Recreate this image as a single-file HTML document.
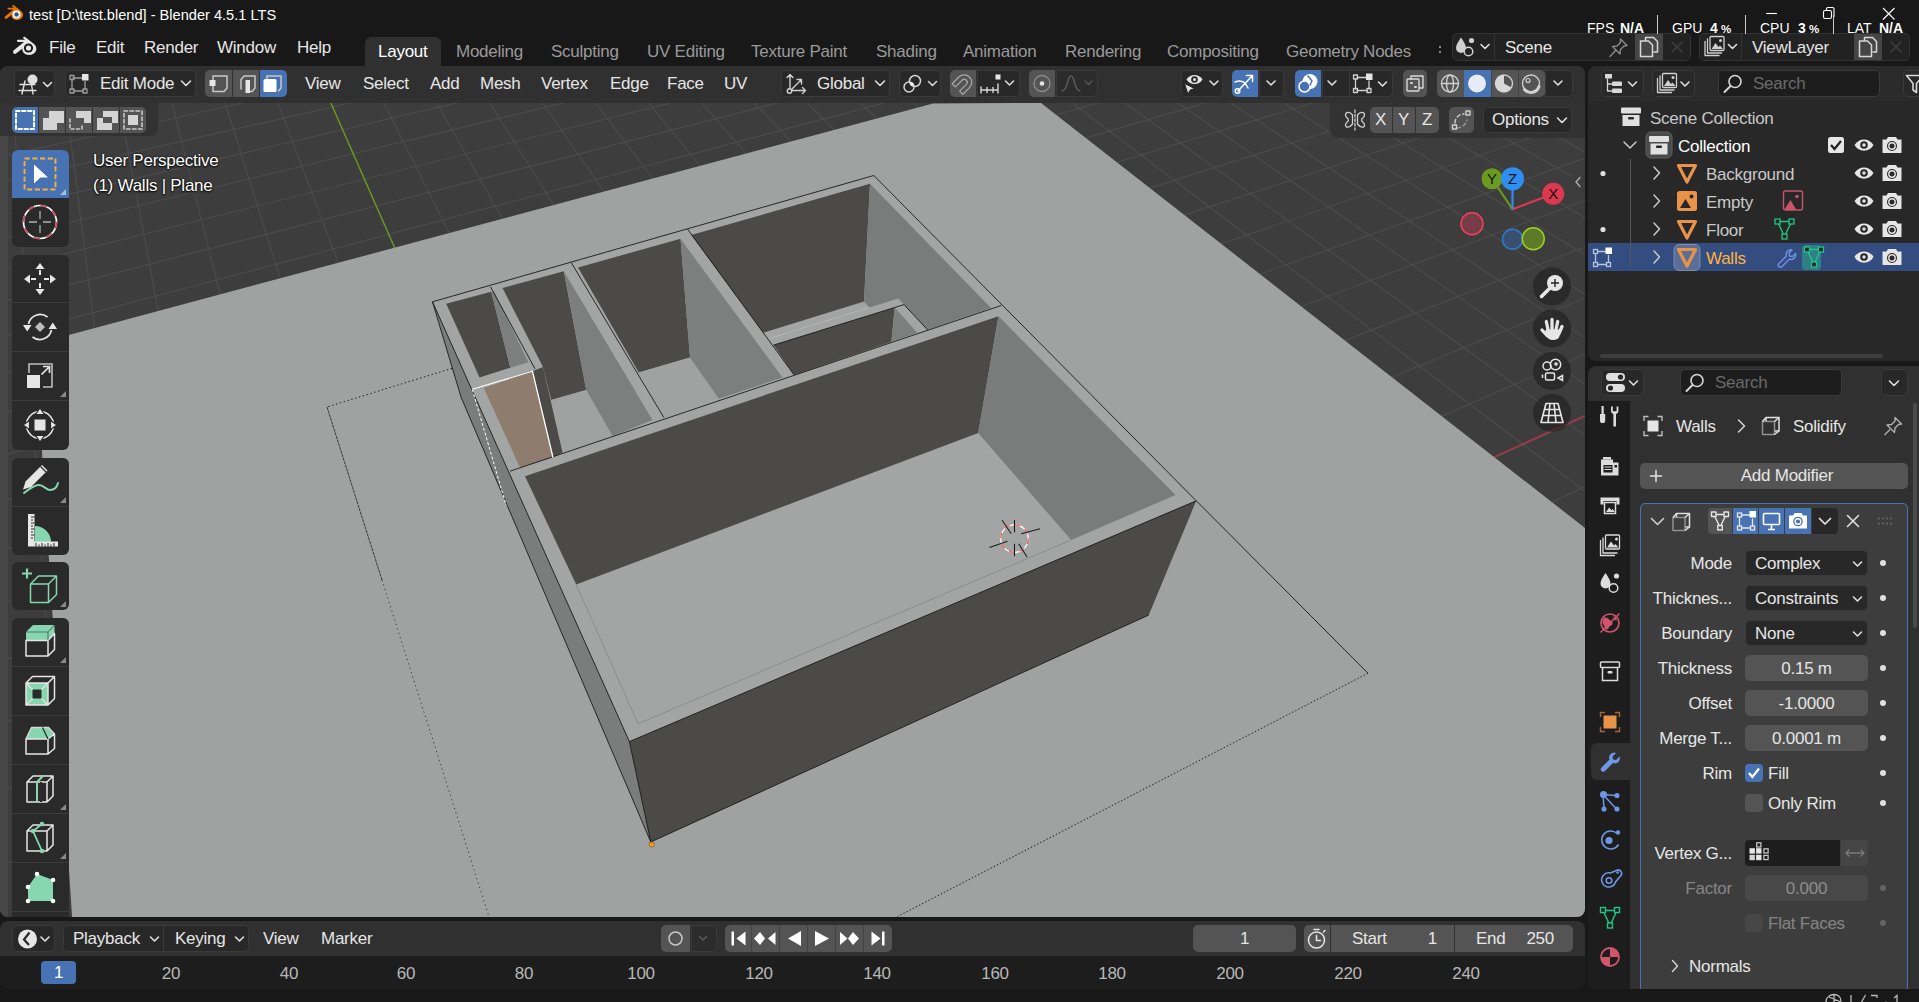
<!DOCTYPE html>
<html><head><meta charset="utf-8"><title>Blender</title>
<style>
*{box-sizing:border-box;margin:0;padding:0}
html,body{width:1919px;height:1002px;overflow:hidden;background:#181818}
body{font-family:"Liberation Sans",sans-serif;font-size:17px;letter-spacing:-.25px;color:#e6e6e6;position:relative}
.abs{position:absolute}
.t{position:absolute;white-space:nowrap;line-height:20px;height:20px}
.hdr{position:absolute;background:#303030}
.dd{position:absolute;background:#282828;border-radius:5px;border:1px solid #3a3a3a}
.btn{position:absolute;background:#545454;border-radius:5px}
.blue{background:#4772b3}
svg{position:absolute;overflow:visible}
.ic{stroke-linecap:round;stroke-linejoin:round}.ic:not([stroke]){stroke:#e0e0e0}.ic:not([fill]){fill:none}.ic:not([stroke-width]){stroke-width:1.5}
g.ic *{vector-effect:none}
</style></head><body>

<!-- AREAS -->
<div class="abs" style="left:1588px;top:66px;width:331px;height:295px;background:#282828;border-radius:8px 0 0 8px"></div>
<div class="abs" style="left:1588px;top:66px;width:331px;height:35px;background:#2b2b2b;border-radius:8px 0 0 0"></div>
<div class="abs" style="left:1588px;top:366px;width:331px;height:624px;background:#303030;border-radius:8px 0 0 8px"></div>
<div class="abs" style="left:1588px;top:401px;width:42px;height:589px;background:#1d1d1d;border-radius:0 0 0 8px"></div>
<div class="abs" style="left:0px;top:921px;width:1585px;height:68px;background:#1d1d1d;border-radius:8px"></div>
<div class="abs" style="left:0px;top:921px;width:1585px;height:35px;background:#303030;border-radius:8px 8px 0 0"></div>

<svg id="scene" width="1919" height="1002" viewBox="0 0 1919 1002" style="position:absolute;left:0;top:0">
<defs><clipPath id="vpclip"><rect x="0" y="66" width="1585" height="851" rx="8" ry="8"/></clipPath></defs>
<g clip-path="url(#vpclip)">
<rect x="0" y="66" width="1585" height="851" fill="#3d3d3d"/>
<path d="M10.9 66.0L64.6 917.0M61.5 66.0L168.7 917.0M112.1 66.0L272.8 917.0M162.7 66.0L376.9 917.0M213.4 66.0L481.1 917.0M264.0 66.0L585.2 917.0M365.3 66.0L793.4 917.0M415.9 66.0L897.5 917.0M466.5 66.0L1001.6 917.0M517.1 66.0L1105.7 917.0M567.8 66.0L1209.9 917.0M618.4 66.0L1314.0 917.0M669.0 66.0L1418.1 917.0M719.6 66.0L1522.2 917.0M770.3 66.0L1585.0 875.9M820.9 66.0L1585.0 780.9M871.5 66.0L1585.0 696.5M922.2 66.0L1585.0 620.9M972.8 66.0L1585.0 552.9M1023.4 66.0L1585.0 491.4M1074.0 66.0L1585.0 435.4M1124.7 66.0L1585.0 384.4M1175.3 66.0L1585.0 337.6M1225.9 66.0L1585.0 294.5M1276.5 66.0L1585.0 254.7M1327.2 66.0L1585.0 217.9M1377.8 66.0L1585.0 183.7M1428.4 66.0L1585.0 151.9M1479.1 66.0L1585.0 122.2M1529.7 66.0L1585.0 94.4M1580.3 66.0L1585.0 68.3M101.8 66.0L0.0 86.9M204.3 66.0L0.0 109.1M306.7 66.0L0.0 132.4M409.1 66.0L0.0 156.9M511.6 66.0L0.0 182.8M614.0 66.0L0.0 210.2M716.4 66.0L0.0 239.2M818.9 66.0L0.0 270.0M921.3 66.0L0.0 302.6M1023.7 66.0L0.0 337.4M1126.1 66.0L0.0 374.5M1228.6 66.0L0.0 414.1M1331.0 66.0L0.0 456.5M1433.4 66.0L0.0 502.1M1535.9 66.0L0.0 551.1M1585.0 83.5L0.0 604.1M1585.0 119.3L0.0 661.4M1585.0 158.1L0.0 723.7M1585.0 200.5L0.0 791.7M1585.0 246.9L0.0 866.1M1585.0 297.9L75.2 917.0M1585.0 354.2L280.8 917.0M1585.0 416.8L486.4 917.0M1585.0 486.6L692.0 917.0M1585.0 565.1L897.6 917.0M1585.0 654.1L1103.2 917.0" stroke="#4c4c4c" stroke-width="1.1" fill="none"/>
<path d="M314.6 66.0L689.3 917.0" stroke="#6f9a1f" stroke-width="1.4"/>
<path d="M1585.0 415.7L483.0 917.0" stroke="#b03546" stroke-width="1.5"/>
<polygon points="933.0,103.4 1041.0,103.0 1585.0,528.0 1620.0,555.0 1620.0,930.0 73.0,930.0 72.0,916.0 35.0,344.0 68.8,335.0" fill="#a0a2a2" />
<polygon points="432.5,301.8 873.8,175.5 1196.2,500.8 629.4,741.6" fill="#a3a5a5" />
<polygon points="432.5,301.8 629.4,741.6 650.8,842.0 461.0,397.0" fill="#7b7d7d" />
<polygon points="629.4,741.6 1196.2,500.8 1148.8,615.0 650.8,842.0" fill="#4b4a49" />
<polygon points="446.2,303.8 491.2,291.8 510.3,367.7 479.5,377.6" fill="#4b4a49" />
<polygon points="491.2,291.8 494.0,290.9 528.3,362.2 510.3,367.7" fill="#7d7f7e" />
<polygon points="502.5,288.0 563.8,271.2 586.2,390.0 551.2,400.0 543.0,367.0" fill="#4b4a49" />
<polygon points="563.8,271.2 652.5,420.0 612.5,436.2 586.2,390.0" fill="#7d7f7e" />
<polygon points="551.2,400.0 586.2,390.0 612.5,436.2 562.5,452.5" fill="#a0a2a2" />
<polygon points="483.8,388.0 532.5,371.2 553.0,457.5 520.0,467.7" fill="#8e7d6e" />
<polygon points="532.5,371.2 543.0,367.0 562.5,452.5 553.0,457.5" fill="#4b4a49" />
<polygon points="578.0,267.5 680.5,238.8 690.0,357.5 638.8,372.5" fill="#4b4a49" />
<polygon points="638.8,372.5 690.0,357.5 718.8,398.8 663.8,417.5" fill="#a0a2a2" />
<polygon points="680.5,238.8 782.5,377.5 718.8,398.8 690.0,357.5" fill="#7d7f7e" />
<polygon points="691.2,235.0 870.0,183.8 864.0,301.4 763.3,332.7" fill="#4b4a49" />
<polygon points="870.0,183.8 991.0,308.0 927.5,329.8 904.1,304.6 898.3,298.5 869.3,307.5 864.0,301.4" fill="#7a7c7b" />
<polygon points="773.6,345.1 894.7,307.6 891.4,341.8 794.0,375.0" fill="#4b4a49" />
<polygon points="894.7,307.6 917.3,332.7 891.4,341.8" fill="#7d7f7e" />
<polygon points="525.0,476.2 998.5,316.2 978.2,433.0 576.2,584.5" fill="#4b4a49" />
<polygon points="998.5,316.2 1175.5,495.0 1071.2,540.0 978.2,433.0" fill="#7a7c7b" />
<path d="M576.25 584.5L638 723.75L1071.25 540" stroke="#8b8d8d" stroke-width="1" fill="none"/>
<path d="M769.2 338.6L869.3 307.5" stroke="#b4b6b6" stroke-width="1" fill="none"/>
<path d="M432.5 301.8L873.8 175.5M873.8 175.5L1196.2 500.8M1196.2 500.8L629.4 741.6M629.4 741.6L432.5 301.8M490.5 286.8L535.0 368.8M472.5 389.5L532.5 371.2M571.2 262.5L663.8 417.5M687.5 229.0L793.8 374.5M510.0 471.2L1001.2 305.5M773.6 345.1L904.1 304.6M904.1 304.6L927.5 329.8M629.4 741.6L650.8 842.0M650.8 842.0L1148.8 615.0M432.5 301.8L461.0 397.0M461.0 397.0L650.8 842.0" stroke="#1a1a1a" stroke-width="0.9" fill="none"/>
<path d="M1196.25 500.75L1368 673.25" stroke="#1a1a1a" stroke-width="0.9"/>
<path d="M1368 673.25L897.5 916.5" stroke="#222" stroke-width="1" stroke-dasharray="1.5 2"/>
<path d="M452 368.3L327 407" stroke="#222" stroke-width="1" stroke-dasharray="1.5 2.5" fill="none"/>
<path d="M327 407L382 580" stroke="#2a2a2a" stroke-width="0.9" stroke-dasharray="3 0.8" fill="none"/>
<path d="M382 580L490 920" stroke="#333" stroke-width="1" stroke-dasharray="1.2 3.4" fill="none"/>
<path d="M472.3 389.4L532.5 371.25L553 457.5" stroke="#fff" stroke-width="1.3" fill="none"/>
<path d="M472.3 389.4L506 505" stroke="#fff" stroke-width="1" stroke-dasharray="3 2" fill="none"/>
<circle cx="651.7" cy="844.5" r="2.6" fill="#f39c28" stroke="#7a4a10" stroke-width="0.6"/>
<g fill="none"><circle cx="1014.5" cy="538.6" r="13.8" stroke="#fff" stroke-width="1.3"/><circle cx="1014.5" cy="538.6" r="13.8" stroke="#ee5a55" stroke-width="1.3" stroke-dasharray="5.4 5.44"/>
<path d="M1014.5 520v12.5M1014.5 543.7v12.5M989.5 547.5l18-6.2M1021.2 533.7l18.8-5M1002 520l9.2 13.7M1018.7 543.7l8.3 13.3" stroke="#1c1c1c" stroke-width="1.1"/></g>
<rect x="0" y="100" width="8" height="820" fill="#474747"/>
</g></svg>
<!-- VIEWPORT HEADER -->
<div class="abs" style="left:0px;top:66px;width:1585px;height:37px;background:#303030;border-radius:8px 8px 0 0"></div>
<div class="abs" style="left:0px;top:103px;width:158px;height:33px;background:rgba(48,48,48,.82);border-radius:0 0 8px 0"></div>
<div class="abs" style="left:1330px;top:103px;width:255px;height:35px;background:rgba(48,48,48,.82);border-radius:0 0 0 8px"></div>
<!-- editor type -->
<div class="dd" style="left:14px;top:70px;width:41px;height:27px"></div>
<svg style="left:18px;top:72px" width="36" height="24" viewBox="0 0 36 24"><g class="ic" stroke-width="1.4"><path d="M2 12.5h15M1 18.5h17M7 9l-3 13M13 9l2 13"/></g><circle cx="14.5" cy="7.5" r="5" fill="#e0e0e0"/><path d="M25.5 10.5l4 4 4-4" class="ic" stroke-width="1.6"/></svg>
<!-- mode dropdown -->
<div class="dd" style="left:65px;top:70px;width:131px;height:27px"></div>
<svg style="left:68px;top:72px" width="24" height="24" viewBox="0 0 24 24"><g class="ic" stroke="#9c9c9c" stroke-width="1.3"><path d="M5 6h9M4 7.5v10M5.5 19h10M17 9.5v8"/><rect x="2" y="3.5" width="4" height="4"/><rect x="2" y="17" width="4" height="4"/><rect x="15" y="17" width="4" height="4"/></g><rect x="14" y="2" width="6.5" height="6.5" fill="#e6e6e6"/></svg>
<div class="t" style="left:100px;top:74px">Edit Mode</div>
<svg style="left:179px;top:77px" width="14" height="12" viewBox="0 0 14 12"><path d="M2.5 4l4.5 4.5L11.500 4" class="ic" stroke-width="1.6"/></svg>
<!-- select modes -->
<div class="btn" style="left:205px;top:70px;width:27px;height:27px;border-radius:5px 0 0 5px"></div>
<div class="btn" style="left:233px;top:70px;width:26px;height:27px;border-radius:0"></div>
<div class="btn blue" style="left:260px;top:70px;width:27px;height:27px;border-radius:0 5px 5px 0"></div>
<svg style="left:205px;top:70px" width="82" height="27" viewBox="0 0 82 27"><g class="ic" stroke="#c8c8c8" stroke-width="1.5"><path d="M8 6h14v12l-3 3.500H8v-6M8 11V6"/><path d="M36 19V9.500l3-3.500h11v12l-3 3.500h-2"/><path d="M62 9V6h14v12l-2.500 3"/></g><rect x="4.500" y="10" width="6" height="6" fill="#e6e6e6"/><rect x="40.500" y="10" width="4.500" height="13" fill="#e6e6e6"/><rect x="58.500" y="9" width="13" height="13" rx="1.500" fill="#fff"/></svg>
<!-- menus -->
<div class="t" style="left:305px;top:74px">View</div>
<div class="t" style="left:363px;top:74px">Select</div>
<div class="t" style="left:430px;top:74px">Add</div>
<div class="t" style="left:480px;top:74px">Mesh</div>
<div class="t" style="left:541px;top:74px">Vertex</div>
<div class="t" style="left:610px;top:74px">Edge</div>
<div class="t" style="left:667px;top:74px">Face</div>
<div class="t" style="left:724px;top:74px">UV</div>
<!-- orientation -->
<div class="dd" style="left:781px;top:70px;width:109px;height:27px"></div>
<svg style="left:785px;top:72px" width="26" height="24" viewBox="0 0 26 24"><g class="ic" stroke="#d0d0d0" stroke-width="1.4"><path d="M5 2.500v14M2 5.500l3-3 3 3M6.500 18.500h14M17.500 15.500l3 3-3 3M7 17l9-9M12 7.500h4.500V12"/><circle cx="4.500" cy="19" r="2.200"/></g></svg>
<div class="t" style="left:817px;top:74px">Global</div>
<svg style="left:873px;top:77px" width="14" height="12" viewBox="0 0 14 12"><path d="M2.500 4l4.500 4.500L11.500 4" class="ic" stroke-width="1.600"/></svg>
<!-- pivot -->
<div class="dd" style="left:899px;top:70px;width:42px;height:27px"></div>
<svg style="left:901px;top:72px" width="40" height="24" viewBox="0 0 40 24"><g class="ic" stroke="#d8d8d8" stroke-width="1.500"><circle cx="14" cy="9" r="5.500"/><circle cx="8" cy="15" r="5"/><path d="M27.500 9.500l4 4 4-4" stroke-width="1.600"/></g><circle cx="11" cy="12" r="1.600" fill="#fff"/></svg>
<!-- snap -->
<div class="btn" style="left:950px;top:70px;width:26px;height:27px;border-radius:5px 0 0 5px"></div>
<div class="dd" style="left:977px;top:70px;width:43px;height:27px;border-radius:0 5px 5px 0"></div>
<svg style="left:950px;top:70px" width="72" height="27" viewBox="0 0 72 27"><g transform="translate(13.500 13) rotate(45)"><path d="M-7.500 8.500V-1a7.500 7.500 0 0 1 15 0V8.500H3V-1a3 3 0 0 0-6 0V8.500z" class="ic" stroke="#a6a6a6" stroke-width="1.300"/></g><g class="ic" stroke="#d8d8d8" stroke-width="1.400"><path d="M31 20h16M31 17v6M37 17.500v5M43 17.500v5M48 14v9"/><path d="M55.500 11l4 4 4-4" stroke-width="1.600"/></g><rect x="45.500" y="4.500" width="5" height="5" fill="#e6e6e6"/></svg>
<!-- proportional -->
<div class="btn" style="left:1029px;top:70px;width:26px;height:27px;border-radius:5px 0 0 5px"></div>
<div class="dd" style="left:1056px;top:70px;width:42px;height:27px;border-radius:0 5px 5px 0;background:#2c2c2c"></div>
<svg style="left:1029px;top:70px" width="70" height="27" viewBox="0 0 70 27"><circle cx="13" cy="13.500" r="8" class="ic" stroke="#8e8e8e" stroke-width="1.300"/><circle cx="13" cy="13.500" r="2.300" fill="#e6e6e6"/><path d="M33 21c6 0 5-15 9-15s3 15 9 15" class="ic" stroke="#5e5e5e" stroke-width="1.400"/><path d="M56 11l3.500 3.500L63 11" class="ic" stroke="#555" stroke-width="1.500"/></svg>
<!-- right: visibility -->
<div class="dd" style="left:1181px;top:70px;width:42px;height:27px"></div>
<svg style="left:1181px;top:70px" width="42" height="27" viewBox="0 0 42 27"><path d="M3.500 13.500l3.500 10.500 2.200-4 4.300-1.500z" fill="#e6e6e6" stroke="#282828" stroke-width="1"/><path d="M5.500 9.500c3.500-6 12.500-6 16 0-3.500 6-12.500 6-16 0z" fill="#e6e6e6"/><circle cx="13.500" cy="9.500" r="3.300" fill="#282828"/><circle cx="13.500" cy="9.500" r="1.500" fill="#e6e6e6"/><path d="M29 11l4 4 4-4" class="ic" stroke-width="1.600"/></svg>
<!-- gizmo -->
<div class="btn blue" style="left:1232px;top:70px;width:26px;height:27px;border-radius:5px 0 0 5px"></div>
<div class="dd" style="left:1259px;top:70px;width:25px;height:27px;border-radius:0 5px 5px 0"></div>
<svg style="left:1232px;top:70px" width="52" height="27" viewBox="0 0 52 27"><g class="ic" stroke="#fff" stroke-width="1.500"><path d="M3 12c5-2 10-1 13 6M6 21l14-15M14.500 5.500H20.500v6"/><circle cx="5.500" cy="21" r="2.300"/></g><path d="M35 11l4 4 4-4" class="ic" stroke-width="1.600"/></svg>
<!-- overlays -->
<div class="btn blue" style="left:1295px;top:70px;width:26px;height:27px;border-radius:5px 0 0 5px"></div>
<div class="dd" style="left:1322px;top:70px;width:28px;height:27px;border-radius:0"></div>
<svg style="left:1295px;top:70px" width="52" height="27" viewBox="0 0 52 27"><circle cx="15" cy="11.500" r="7.500" fill="#fff"/><circle cx="9.500" cy="16.500" r="5.500" class="ic" stroke="#fff" stroke-width="1.500" fill="#4772b3"/><path d="M13 6l4 5-2 4" class="ic" stroke="#4772b3" stroke-width="1.500"/><path d="M33 11l4 4 4-4" class="ic" stroke-width="1.600"/></svg>
<!-- mesh edit dd -->
<div class="dd" style="left:1350px;top:70px;width:43px;height:27px;border-radius:0 5px 5px 0;border-left:none"></div>
<svg style="left:1352px;top:71px" width="40" height="26" viewBox="0 0 40 26"><g class="ic" stroke="#d0d0d0" stroke-width="1.300"><path d="M5 6.500h9M3.500 8v10M5 19.500h10.500M17 10v8"/><rect x="1.500" y="4" width="4" height="4"/><rect x="1.500" y="17.500" width="4" height="4"/><rect x="15" y="17.500" width="4" height="4"/></g><rect x="14" y="2.500" width="6.500" height="6.500" fill="#e6e6e6"/><path d="M26.500 11l4 4 4-4" class="ic" stroke-width="1.600"/></svg>
<!-- xray -->
<div class="btn" style="left:1403px;top:70px;width:24px;height:27px"></div>
<svg style="left:1403px;top:70px" width="24" height="27" viewBox="0 0 24 27"><g class="ic" stroke="#d8d8d8" stroke-width="1.400"><rect x="4" y="9" width="12" height="12" rx="1"/><path d="M8 9V6h12v12h-3.500"/><path d="M8 13h1M12 17h1" stroke-width="2"/></g></svg>
<!-- shading -->
<div class="btn" style="left:1437px;top:70px;width:27px;height:27px;border-radius:5px 0 0 5px"></div>
<div class="btn blue" style="left:1464px;top:70px;width:27px;height:27px;border-radius:0"></div>
<div class="btn" style="left:1491px;top:70px;width:27px;height:27px;border-radius:0;border-left:1px solid #444"></div>
<div class="btn" style="left:1518px;top:70px;width:27px;height:27px;border-radius:0 5px 5px 0;border-left:1px solid #444"></div>
<div class="dd" style="left:1545px;top:70px;width:28px;height:27px;border-radius:0 5px 5px 0"></div>
<svg style="left:1437px;top:70px" width="136" height="27" viewBox="0 0 136 27"><g class="ic" stroke="#d0d0d0" stroke-width="1.400"><circle cx="13" cy="13.500" r="8.500"/><ellipse cx="13" cy="13.500" rx="3.500" ry="8.500"/><path d="M4.500 13.500h17"/></g><circle cx="40" cy="13.500" r="9" fill="#e6ebf5"/><circle cx="67" cy="13.500" r="8.500" class="ic" stroke="#d0d0d0" stroke-width="1.400"/><path d="M67 5a8.500 8.500 0 1 0 7.400 12.500L67 13.500z" fill="#d8d8d8"/><circle cx="94" cy="13.500" r="8.500" class="ic" stroke="#d0d0d0" stroke-width="1.400"/><path d="M87.500 19.500a8.500 8.500 0 0 0 14.500-3" class="ic" stroke="#d0d0d0" stroke-width="3"/><circle cx="91" cy="10.500" r="2" class="ic" stroke="#d0d0d0" stroke-width="1.200"/><path d="M117 11l4 4 4-4" class="ic" stroke-width="1.600"/></svg>
<!-- row 2 left: selection mode icons -->
<div class="btn blue" style="left:12px;top:107px;width:26px;height:26px;border-radius:5px 0 0 5px"></div>
<div class="btn" style="left:39px;top:107px;width:26px;height:26px;border-radius:0"></div>
<div class="btn" style="left:66px;top:107px;width:26px;height:26px;border-radius:0"></div>
<div class="btn" style="left:93px;top:107px;width:26px;height:26px;border-radius:0"></div>
<div class="btn" style="left:120px;top:107px;width:26px;height:26px;border-radius:0 5px 5px 0"></div>
<svg style="left:12px;top:107px" width="134" height="26" viewBox="0 0 134 26"><rect x="4" y="4" width="18" height="18" class="ic" stroke="#fff" stroke-width="2" stroke-dasharray="3.500 2.500" stroke-linecap="butt"/><path d="M37 4h15v12h-7v7h-14V11h6z" fill="#d4d4d4"/><path d="M64 4h15v12h-7V11h-8z" fill="#d4d4d4"/><path d="M58 12v10h12v-5" class="ic" stroke="#c8c8c8" stroke-width="1.600" stroke-dasharray="3 2.500" stroke-linecap="butt"/><path d="M91 4h15v12h-6v-6h-9zM85 11h6v5h9v7H85z" fill="#d4d4d4"/><rect x="112" y="4" width="18" height="18" class="ic" stroke="#c8c8c8" stroke-width="1.600" stroke-dasharray="3.500 2.500" stroke-linecap="butt"/><rect x="116" y="8" width="10" height="10" fill="#d4d4d4"/></svg>
<!-- row 2 right -->
<svg style="left:1342px;top:107px" width="26" height="26" viewBox="0 0 26 26"><g class="ic" stroke="#d0d0d0" stroke-width="1.300"><path d="M10.500 8c-3-4-7-3-7 0 0 3 3 3 3 5s-3 2-3 5c0 3 4 3 7-1zM15.500 8c3-4 7-3 7 0 0 3-3 3-3 5s3 2 3 5c0 3-4 3-7-1z"/><path d="M13 3v20" stroke-dasharray="2.500 2"/></g></svg>
<div class="btn" style="left:1370px;top:107px;width:22px;height:26px;border-radius:5px 0 0 5px"></div>
<div class="btn" style="left:1393px;top:107px;width:22px;height:26px;border-radius:0"></div>
<div class="btn" style="left:1416px;top:107px;width:23px;height:26px;border-radius:0 5px 5px 0"></div>
<div class="t" style="left:1375px;top:110px">X</div><div class="t" style="left:1398px;top:110px">Y</div><div class="t" style="left:1422px;top:110px">Z</div>
<div class="btn" style="left:1449px;top:107px;width:25px;height:26px"></div>
<svg style="left:1449px;top:107px" width="25" height="26" viewBox="0 0 25 26"><g class="ic" stroke="#d0d0d0" stroke-width="1.400"><path d="M6 16c0-5 4-9 9-9" stroke-dasharray="3.500 3"/><path d="M8 21c5 0 9-4 10-8" stroke-dasharray="3.500 3" stroke="#999"/><rect x="3.500" y="18" width="4" height="4"/><rect x="17" y="4" width="4" height="4"/></g></svg>
<div class="dd" style="left:1483px;top:107px;width:89px;height:26px"></div>
<div class="t" style="left:1492px;top:110px">Options</div>
<svg style="left:1555px;top:114px" width="14" height="12" viewBox="0 0 14 12"><path d="M2.500 4l4.500 4.500L11.500 4" class="ic" stroke-width="1.600"/></svg>

<!-- TOOLBAR -->
<div class="abs" style="left:0;top:0;width:1585px;height:917px;overflow:hidden">
<div class="abs" style="left:12px;top:150px;width:57px;height:97px;background:#2a2a2a;border-radius:6px;overflow:hidden">
<div class="abs" style="left:0;top:47px;width:57px;height:1px;background:#3c3c3c"></div>
<div class="abs" style="left:0;top:0;width:57px;height:48px;background:#4772b3"></div>
</div>
<div class="abs" style="left:12px;top:255px;width:57px;height:195px;background:#2a2a2a;border-radius:6px;overflow:hidden">
<div class="abs" style="left:0;top:47px;width:57px;height:1px;background:#3c3c3c"></div>
<div class="abs" style="left:0;top:96px;width:57px;height:1px;background:#3c3c3c"></div>
<div class="abs" style="left:0;top:145px;width:57px;height:1px;background:#3c3c3c"></div>
</div>
<div class="abs" style="left:12px;top:458px;width:57px;height:97px;background:#2a2a2a;border-radius:6px;overflow:hidden">
<div class="abs" style="left:0;top:48px;width:57px;height:1px;background:#3c3c3c"></div>
</div>
<div class="abs" style="left:12px;top:562px;width:57px;height:48px;background:#2a2a2a;border-radius:6px;overflow:hidden">
</div>
<div class="abs" style="left:12px;top:618px;width:57px;height:342px;background:#2a2a2a;border-radius:6px;overflow:hidden">
<div class="abs" style="left:0;top:48px;width:57px;height:1px;background:#3c3c3c"></div>
<div class="abs" style="left:0;top:97px;width:57px;height:1px;background:#3c3c3c"></div>
<div class="abs" style="left:0;top:146px;width:57px;height:1px;background:#3c3c3c"></div>
<div class="abs" style="left:0;top:195px;width:57px;height:1px;background:#3c3c3c"></div>
<div class="abs" style="left:0;top:244px;width:57px;height:1px;background:#3c3c3c"></div>
<div class="abs" style="left:0;top:293px;width:57px;height:1px;background:#3c3c3c"></div>
</div>
<svg style="left:18px;top:152px" width="44" height="44" viewBox="-22 -22 44 44"><rect x="-15.500" y="-15.500" width="31" height="31" fill="none" stroke="#f5b041" stroke-width="1.900" stroke-dasharray="5.200 2.550"/><path d="M-6 -9.500L8 3.500H0.500L-6 9.500z" fill="#fff"/></svg>
<svg style="left:60px;top:189px" width="6" height="6" viewBox="0 0 6 6"><path d="M6 0v6H0z" fill="#a9bedc"/></svg>
<svg style="left:18px;top:200px" width="44" height="44" viewBox="-22 -22 44 44"><circle r="16.500" fill="none" stroke="#fff" stroke-width="1.700"/><circle r="16.500" fill="none" stroke="#c8445a" stroke-width="1.700" stroke-dasharray="6.480 6.480"/><path d="M0 -11v8M0 3v8M-11 0h8M3 0h8" stroke="#b0b0b0" stroke-width="1.300"/></svg>
<svg style="left:18px;top:257px" width="44" height="44" viewBox="-22 -22 44 44"><g fill="#e6e6e6"><path d="M0 -16l-4.500 6h9zM0 16l-4.500 -6h9zM-16 0l6 -4.500v9zM16 0l-6 -4.500v9z"/><rect x="-1" y="-9" width="2" height="5"/><rect x="-1" y="4" width="2" height="5"/><rect x="-9" y="-1" width="5" height="2"/><rect x="4" y="-1" width="5" height="2"/></g></svg>
<svg style="left:18px;top:305px" width="44" height="44" viewBox="-22 -22 44 44"><g fill="none" stroke="#e6e6e6" stroke-width="1.700"><path d="M-11.500 -3a12 12 0 0 1 19 -7M11.500 3a12 12 0 0 1 -19 7"/></g><path d="M0 -5l5 5 -5 5 -5 -5z" fill="#bdbdbd"/><path d="M-17 -2h8.500l-4.250 6.500zM17 2h-8.500l4.250 -6.500z" fill="#e6e6e6"/></svg>
<svg style="left:18px;top:354px" width="44" height="44" viewBox="-22 -22 44 44"><path d="M-11 -3v-9h23v23h-9" fill="none" stroke="#bdbdbd" stroke-width="1.600"/><rect x="-13" y="-1" width="13" height="13" fill="#e6e6e6"/><path d="M1.500 -1.500l7 -7M3 -9.500h6.500v6.500" fill="none" stroke="#e6e6e6" stroke-width="1.700"/></svg>
<svg style="left:60px;top:391px" width="6" height="6" viewBox="0 0 6 6"><path d="M6 0v6H0z" fill="#8a8a8a"/></svg>
<svg style="left:18px;top:403px" width="44" height="44" viewBox="-22 -22 44 44"><circle r="13.500" fill="none" stroke="#e6e6e6" stroke-width="1.600"/><rect x="-5.500" y="-5.500" width="11" height="11" fill="#e6e6e6"/><g fill="#e6e6e6" stroke="#2a2a2a" stroke-width="1.200"><path d="M0 -17l-4.500 6.500h9zM0 17l-4.500 -6.500h9zM-17 0l6.500 -4.500v9zM17 0l-6.500 -4.500v9z"/></g></svg>
<svg style="left:18px;top:460px" width="44" height="44" viewBox="-22 -22 44 44"><path d="M-16 10c5 -4 9 -7 14 -8s8 5 12 5 7 -3 8 -7" fill="none" stroke="#86d6b0" stroke-width="2" stroke-linecap="round" transform="translate(0 1)"/><path d="M-17 7.500l2.500 -8 16.500 -16.500 5.500 5.500 -16.500 16.500z" fill="#e6e6e6"/><path d="M0.500 -15.500l5.500 5.500" stroke="#2a2a2a" stroke-width="1.300"/></svg>
<svg style="left:60px;top:497px" width="6" height="6" viewBox="0 0 6 6"><path d="M6 0v6H0z" fill="#8a8a8a"/></svg>
<svg style="left:18px;top:509px" width="44" height="44" viewBox="-22 -22 44 44"><path d="M-5 11V-5a16 16 0 0 1 16 16z" fill="#86d6b0"/><path d="M-12 -17h6.500v27.500h23.500v5h-30z" fill="#e6e6e6"/><path d="M-9 -14h3.500M-9 -11h2M-9 -8h3.500M-9 -5h2M-9 -2h3.500M-9 1h2M-9 4h3.500M-9 7h2M-4 12v3.500M-1 13.500v2M2 12v3.500M5 13.500v2M8 12v3.500M11 13.500v2M14 12v3.500" stroke="#2a2a2a" stroke-width="1"/></svg>
<svg style="left:18px;top:564px" width="44" height="44" viewBox="-22 -22 44 44"><g fill="none" stroke="#86d6b0" stroke-width="1.500" stroke-linejoin="round"><path d="M-9.500 -2l8 -8h18l-8 8zM-9.500 -2v18.500h18v-18.500M8.500 16.500l8 -8v-18.500"/></g><path d="M-13 -17.500v10M-18 -12.500h10" stroke="#86d6b0" stroke-width="2.200"/></svg>
<svg style="left:60px;top:601px" width="6" height="6" viewBox="0 0 6 6"><path d="M6 0v6H0z" fill="#8a8a8a"/></svg>
<svg style="left:18px;top:620px" width="44" height="44" viewBox="-22 -22 44 44"><path d="M-14 -10l7 -7h21.500v8.500l-6.500 7h-22z" fill="#86d6b0"/><g fill="none" stroke="#e6e6e6" stroke-width="1.500" stroke-linejoin="round"><path d="M-14 -1.500v15.500h22v-15.500zM8 14l6.500 -6.500v-16l-6.500 7"/></g><path d="M-14 -10h22l6.500 -7M8 -10v8.500" fill="none" stroke="#2a2a2a" stroke-width="1.100" opacity=".55"/></svg>
<svg style="left:60px;top:657px" width="6" height="6" viewBox="0 0 6 6"><path d="M6 0v6H0z" fill="#8a8a8a"/></svg>
<svg style="left:18px;top:669px" width="44" height="44" viewBox="-22 -22 44 44"><path d="M-14 -8h22v22h-22z" fill="#86d6b0"/><rect x="-7.500" y="-1.500" width="9" height="9" fill="#2a2a2a"/><g fill="none" stroke="#e6e6e6" stroke-width="1.500" stroke-linejoin="round"><path d="M-14 -8l6.500 -6.500h22l-6.500 6.500zM-14 -8v22h22v-22M8 14l6.500 -6.500v-22"/><path d="M-14 -8l6.500 6.500M8 -8l-6.500 6.500M-14 14l6.500 -6.500M8 14l-6.500 -6.500" stroke-width="1.200"/></g></svg>
<svg style="left:18px;top:718px" width="44" height="44" viewBox="-22 -22 44 44"><path d="M-14 -1l5.500 -11.500h17l6 6.500 -6.500 5z" fill="#86d6b0"/><g fill="none" stroke="#e6e6e6" stroke-width="1.500" stroke-linejoin="round"><path d="M-14 -1v15h22v-15zM8 14l6.500 -5.500v-14.500l-6.500 5"/><path d="M-14 -1l5.500 -11.500h17l6 6.500" stroke="#d8d8d8"/><path d="M2.500 -12.500l5.500 11.500" stroke="#2a2a2a" stroke-width="1.300"/></g></svg>
<svg style="left:18px;top:767px" width="44" height="44" viewBox="-22 -22 44 44"><g fill="none" stroke="#e6e6e6" stroke-width="1.500" stroke-linejoin="round"><path d="M-13 -7l6 -6h20l-6 6zM-13 -7v20h20v-20M7 13l6 -6v-20"/></g><path d="M-3 13v-20l6 -6" fill="none" stroke="#86d6b0" stroke-width="2"/><path d="M1 13v-20" stroke="#2a2a2a" stroke-width="2"/></svg>
<svg style="left:60px;top:804px" width="6" height="6" viewBox="0 0 6 6"><path d="M6 0v6H0z" fill="#8a8a8a"/></svg>
<svg style="left:18px;top:816px" width="44" height="44" viewBox="-22 -22 44 44"><g fill="none" stroke="#e6e6e6" stroke-width="1.500" stroke-linejoin="round"><path d="M-13 -7l6 -6h20l-6 6zM-13 -7v20h20v-20M7 13l6 -6v-20"/></g><path d="M2 -14l-9 7 9 20" fill="none" stroke="#86d6b0" stroke-width="1.800"/><g fill="#86d6b0"><circle cx="2" cy="-14" r="2.300"/><circle cx="-7" cy="-7" r="2.300"/><circle cx="2" cy="13" r="2.300"/></g></svg>
<svg style="left:60px;top:853px" width="6" height="6" viewBox="0 0 6 6"><path d="M6 0v6H0z" fill="#8a8a8a"/></svg>
<svg style="left:18px;top:865px" width="44" height="44" viewBox="-22 -22 44 44"><path d="M-12 14l0 -14 9 -13 16 6v21z" fill="#86d6b0"/><g fill="#fff"><circle cx="-12" cy="14" r="2.300"/><circle cx="-12" cy="0" r="2.300"/><circle cx="-3" cy="-13" r="2.300"/><circle cx="13" cy="-7" r="2.300"/><circle cx="13" cy="14" r="2.300"/></g></svg>
</div>
<!-- VIEWPORT OVERLAYS -->
<div class="t" style="left:93px;top:151px;text-shadow:0 0 2px #000,0 1px 2px #000;color:#fff">User Perspective</div>
<div class="t" style="left:93px;top:176px;text-shadow:0 0 2px #000,0 1px 2px #000;color:#fff">(1) Walls | Plane</div>
<!-- gizmo -->
<svg style="left:1450px;top:160px" width="130" height="100" viewBox="1450 160 130 100">
<path d="M1512.500 209.250L1492 178.750" stroke="#6b9b1e" stroke-width="2.200"/>
<path d="M1512.500 209.250L1553.250 193.750" stroke="#dc3850" stroke-width="2.200"/>
<path d="M1512.500 209.250V178.750" stroke="#2f8ef2" stroke-width="2.200"/>
<circle cx="1472" cy="223.750" r="11" fill="#773c47" stroke="#f2425a" stroke-width="1.500"/>
<circle cx="1512.500" cy="239.250" r="10" fill="#384f6e" stroke="#2f7ad6" stroke-width="1.500"/>
<circle cx="1533.250" cy="238.750" r="11" fill="#5d7a29" stroke="#9bd325" stroke-width="1.500"/>
<circle cx="1553.250" cy="193.750" r="11" fill="#dc3850"/>
<circle cx="1492" cy="178.750" r="10.500" fill="#6b9b1e"/>
<circle cx="1512.500" cy="178.750" r="11.500" fill="#2f8ef2"/>
<g font-family="Liberation Sans, sans-serif" font-size="15" fill="#111" text-anchor="middle"><text x="1492" y="184">Y</text><text x="1512.500" y="184">Z</text><text x="1553.250" y="199">X</text></g>
</svg>
<!-- nav buttons -->
<svg style="left:1530px;top:265px" width="44" height="172" viewBox="1530 265 44 172">
<g fill="rgba(30,30,30,.6)"><circle cx="1552" cy="286.500" r="19"/><circle cx="1552" cy="328.500" r="19"/><circle cx="1552" cy="371" r="19"/><circle cx="1552" cy="413" r="19"/></g>
<circle cx="1555" cy="283" r="8" fill="#e6e6e6"/><path d="M1549.500 288.500l-8 8" stroke="#e6e6e6" stroke-width="3.500" stroke-linecap="round"/><path d="M1555 279v8M1551 283h8" stroke="#222" stroke-width="1.400"/>
<g stroke="#e6e6e6" stroke-width="3.300" stroke-linecap="round" fill="none"><path d="M1548.300 331L1546.300 321.500M1552 330V319.500M1555.700 331L1557.700 321.500M1559 333.500L1562 326.500M1547 335.500L1542 330"/></g><path d="M1545.800 329.500h14.500l-.3 5q-.8 5.500-7.200 5.500-5 0-8-6z" fill="#e6e6e6"/>
<g fill="none" stroke="#e6e6e6" stroke-width="1.500"><circle cx="1547" cy="366" r="4"/><circle cx="1555.500" cy="364.500" r="5.200"/><circle cx="1556" cy="364" r="1" fill="#e6e6e6"/><rect x="1545.500" y="373" width="9" height="7" rx="1.500"/><path d="M1558 378l4.500-2.500v5z"/><path d="M1542.500 374.500v3.500"/></g>
<g fill="none" stroke="#e6e6e6" stroke-width="1.600" stroke-linejoin="round"><path d="M1546 403.500h12l5 19h-22zM1550 403.500l-2 19M1554 403.500l2 19M1544.500 409.500h15M1543 415.500h18"/></g>
</svg>
<!-- sidebar toggle -->
<div class="abs" style="left:1571px;top:171px;width:14px;height:21px;background:rgba(60,60,60,.9);border-radius:5px 0 0 5px"></div>
<svg style="left:1573px;top:175px" width="10" height="14" viewBox="0 0 10 14"><path d="M7 2.500L3 7l4 4.500" class="ic" stroke="#aaa" stroke-width="1.500"/></svg>

<!-- TOPBAR -->
<svg style="left:4px;top:4px" width="20" height="18" viewBox="0 0 20 18"><path d="M1 12.500L9.500 5.500H4.500c-1.200 0-1.200-1.800 0-1.800h5.500L8.500 2.500c-1-.9.300-2 1.300-1.200L17 7c3 2.500 2.500 6-.5 8-3 1.800-7 1.200-8.500-1.500-.5-1-.6-1.800-.4-2.800L3 14.500c-1.500 1.200-3-.8-2-2z" fill="#ea7600"/><circle cx="12.500" cy="10.500" r="4" fill="#fff"/><circle cx="12.500" cy="10.500" r="2.200" fill="#265787"/></svg>
<div class="t" style="left:29px;top:5px;font-size:14.600px;letter-spacing:0;color:#fff">test [D:\test.blend] - Blender 4.5.1 LTS</div>
<svg style="left:12px;top:35px" width="27" height="24" viewBox="0 0 27 24"><path d="M1.500 15.500L12 7H6c-1.500 0-1.500-2.200 0-2.200h7L11.500 3.500c-1.200-1 .3-2.500 1.600-1.500L22 9c3.500 3 3 7.500-.5 9.800-3.500 2.200-8.500 1.500-10.500-1.800-.7-1.200-.8-2.300-.5-3.500L4 18.500c-1.800 1.500-3.800-1-2.500-3z" fill="#e6e6e6"/><circle cx="16.500" cy="13" r="4.600" fill="#181818"/><circle cx="16.500" cy="13" r="2.600" fill="#e6e6e6"/></svg>
<div class="t" style="left:49px;top:38px">File</div>
<div class="t" style="left:96px;top:38px">Edit</div>
<div class="t" style="left:144px;top:38px">Render</div>
<div class="t" style="left:217px;top:38px">Window</div>
<div class="t" style="left:297px;top:38px">Help</div>
<div class="abs" style="left:365px;top:37px;width:76px;height:30px;background:#303030;border-radius:6px 6px 0 0"></div>
<div class="t" style="left:378px;top:42px;color:#fff">Layout</div>
<div class="t ws" style="left:456px;top:42px">Modeling</div>
<div class="t ws" style="left:551px;top:42px">Sculpting</div>
<div class="t ws" style="left:647px;top:42px">UV Editing</div>
<div class="t ws" style="left:751px;top:42px">Texture Paint</div>
<div class="t ws" style="left:876px;top:42px">Shading</div>
<div class="t ws" style="left:963px;top:42px">Animation</div>
<div class="t ws" style="left:1065px;top:42px">Rendering</div>
<div class="t ws" style="left:1167px;top:42px">Compositing</div>
<div class="t ws" style="left:1286px;top:42px">Geometry Nodes</div>
<div class="abs" style="left:1439px;top:46px;width:2px;height:2px;background:#888;box-shadow:0 5px 0 #888"></div>
<style>.ws{color:#9a9a9a}</style>
<!-- scene selector -->
<div class="dd" style="left:1452px;top:33px;width:239px;height:28px;background:#222;border-color:#333"></div>
<div class="abs" style="left:1494px;top:34px;width:1px;height:26px;background:#333"></div>
<svg style="left:1455px;top:35px" width="40" height="24" viewBox="0 0 40 24"><path d="M6 2.500c2.500 4 5 7 5 10.500a5 5 0 0 1-10 0c0-3.500 2.500-6.500 5-10.500z" fill="#d0d0d0"/><circle cx="13.500" cy="16.500" r="4.300" fill="#222" stroke="#d0d0d0" stroke-width="1.500"/><circle cx="16.500" cy="5.500" r="2.600" fill="#d0d0d0"/><path d="M26 9.500l4 4 4-4" class="ic" stroke-width="1.600"/></svg>
<div class="t" style="left:1505px;top:38px">Scene</div>
<svg style="left:1607px;top:36px" width="24" height="24" viewBox="0 0 24 24"><g class="ic" stroke="#8a8a8a" stroke-width="1.400"><path d="M13.500 3l6.500 6.500-3 .5-3.500 3.500 -.5 4.500-7.500-7.500 4.500-.5L13.500 6.500zM8.500 14.500L3 20.500"/></g></svg>
<div class="btn" style="left:1635px;top:34px;width:28px;height:26px;border-radius:0;background:#464646"></div>
<svg style="left:1637px;top:35px" width="24" height="24" viewBox="0 0 24 24"><g class="ic" stroke="#d8d8d8" stroke-width="1.500"><path d="M8.500 5.500V2.500h8l4 4v10.500h-3.500"/><path d="M3.500 6h8l4 4v11.500h-12z" fill="#464646"/></g></svg>
<svg style="left:1670px;top:40px" width="14" height="14" viewBox="0 0 14 14"><path d="M2 2l10 10M12 2L2 12" class="ic" stroke="#3e3e3e" stroke-width="1.500"/></svg>
<!-- viewlayer selector -->
<div class="dd" style="left:1699px;top:33px;width:211px;height:28px;background:#222;border-color:#333"></div>
<div class="abs" style="left:1741px;top:34px;width:1px;height:26px;background:#333"></div>
<svg style="left:1702px;top:35px" width="40" height="24" viewBox="0 0 40 24"><g class="ic" stroke="#d0d0d0" stroke-width="1.300"><path d="M3 6.500V20.500h14M5.500 4V18h14"/><rect x="8" y="1.500" width="14" height="14" rx="1" fill="#222"/></g><path d="M9.500 14l4-6 3 4 1.500-1.500 3 3.500z" fill="#d0d0d0"/><circle cx="18.500" cy="5.500" r="1.500" fill="#d0d0d0"/><path d="M26.500 9.500l4 4 4-4" class="ic" stroke-width="1.600"/></svg>
<div class="t" style="left:1752px;top:38px">ViewLayer</div>
<div class="btn" style="left:1854px;top:34px;width:28px;height:26px;border-radius:0;background:#464646"></div>
<svg style="left:1856px;top:35px" width="24" height="24" viewBox="0 0 24 24"><g class="ic" stroke="#d8d8d8" stroke-width="1.500"><path d="M8.500 5.500V2.500h8l4 4v10.500h-3.500"/><path d="M3.500 6h8l4 4v11.500h-12z" fill="#464646"/></g></svg>
<svg style="left:1889px;top:40px" width="14" height="14" viewBox="0 0 14 14"><path d="M2 2l10 10M12 2L2 12" class="ic" stroke="#3e3e3e" stroke-width="1.500"/></svg>
<!-- window controls -->
<svg style="left:1760px;top:4px" width="150" height="20" viewBox="1760 4 150 20"><g stroke="#fff" stroke-width="1.100" fill="none"><path d="M1766 13.500h11"/><path d="M1826.500 11.500v-2.500q0-1.500 1.500-1.500h4.500q1.500 0 1.500 1.500v8"/><rect x="1823.500" y="10.500" width="8" height="8" rx="1.500" fill="#181818"/><path d="M1883 8l11.500 11.500M1894.500 8l-11.500 11.500"/></g></svg>
<!-- stats overlay -->
<div class="t st" style="left:1587px;top:18px">FPS</div><div class="t st b" style="left:1620px;top:18px">N/A</div>
<div class="t st" style="left:1672px;top:18px">GPU</div><div class="t st b" style="left:1710px;top:18px">4<span style="font-size:11.500px"> %</span></div>
<div class="t st" style="left:1760px;top:18px">CPU</div><div class="t st b" style="left:1798px;top:18px">3<span style="font-size:11.500px"> %</span></div>
<div class="t st" style="left:1847px;top:18px">LAT</div><div class="t st b" style="left:1879px;top:18px">N/A</div>
<div class="abs" style="left:1657px;top:15px;width:1px;height:19px;background:#ccc"></div>
<div class="abs" style="left:1745px;top:15px;width:1px;height:19px;background:#ccc"></div>
<div class="abs" style="left:1833px;top:15px;width:1px;height:19px;background:#ccc"></div>
<style>.st{font-size:14px;letter-spacing:0;color:#fff;text-shadow:0 0 1px #000}.b{font-weight:bold}</style>

<!-- OUTLINER -->
<div class="dd" style="left:1601px;top:70px;width:43px;height:27px"></div>
<svg style="left:1603px;top:72px" width="40" height="24" viewBox="0 0 40 24"><g fill="#d8d8d8"><rect x="2" y="2" width="7" height="4.500"/><rect x="9" y="9.500" width="10" height="4.500" rx="1"/><rect x="9" y="16.500" width="10" height="4.500" rx="1"/></g><path d="M4.500 7v12h4M4.500 12h4" class="ic" stroke="#d8d8d8" stroke-width="1.300"/><path d="M25.500 10l4 4 4-4" class="ic" stroke-width="1.600"/></svg>
<div class="dd" style="left:1652px;top:70px;width:43px;height:27px"></div>
<svg style="left:1655px;top:72px" width="40" height="24" viewBox="0 0 40 24"><g class="ic" stroke="#d0d0d0" stroke-width="1.300"><path d="M2.500 6.500V20.500h14M5 4V18h14"/><rect x="7.500" y="1.500" width="14" height="14" rx="1" fill="#282828"/></g><path d="M9 14l4-6 3 4 1.500-1.500 3 3.500z" fill="#d0d0d0"/><circle cx="18" cy="5.500" r="1.500" fill="#d0d0d0"/><path d="M26 10l4 4 4-4" class="ic" stroke-width="1.600"/></svg>
<div class="abs" style="left:1718px;top:70px;width:162px;height:27px;background:#1d1d1d;border:1px solid #3a3a3a;border-radius:5px"></div>
<svg style="left:1722px;top:73px" width="22" height="22" viewBox="0 0 22 22"><circle cx="13" cy="8.500" r="6" class="ic" stroke="#d8d8d8" stroke-width="1.600"/><path d="M8.500 13L2.500 19" class="ic" stroke="#d8d8d8" stroke-width="2"/></svg>
<div class="t" style="left:1753px;top:74px;color:#6a6a6a">Search</div>
<div class="dd" style="left:1903px;top:70px;width:30px;height:27px"></div>
<svg style="left:1905px;top:73px" width="16" height="22" viewBox="0 0 16 22"><path d="M1.500 2.500h17l-7 8v9l-3.500-2.500v-6.500z" class="ic" stroke="#d8d8d8" stroke-width="1.600"/></svg>
<!-- rows -->
<div class="abs" style="left:1588px;top:243px;width:331px;height:28px;background:#334d80"></div>
<div class="abs" style="left:1630px;top:159px;width:1px;height:108px;background:#555"></div>
<svg style="left:1590px;top:103px" width="329" height="170" viewBox="1590 103 329 170">
<defs>
<g id="coll"><rect x="-10" y="-9.500" width="20" height="6" rx="1" fill="#e0e0e0"/><path d="M-8.500 -2h17v11h-17z" fill="#e0e0e0"/><rect x="-3" y="0" width="6" height="2.500" rx="1" fill="#282828"/></g>
<g id="mesh"><path d="M-8.500 -8h17L0 8.500z" fill="none" stroke="#e8924a" stroke-width="3.200" stroke-linejoin="round"/></g>
<g id="eye"><path d="M-9.500 0c4-7.500 15-7.500 19 0-4 7.500-15 7.500-19 0z" fill="#e6e6e6"/><circle r="3.800" fill="#282828"/><circle r="1.700" fill="#e6e6e6"/></g>
<g id="cam"><path d="M-9.500 -5.500h4l1.500-2.500h8l1.500 2.500h4v13.500h-19z" fill="#e6e6e6"/><circle cy="1" r="5" fill="#282828"/><circle cy="1" r="3.200" fill="none" stroke="#e6e6e6" stroke-width="1.400"/></g>
<g id="chev"><path d="M-3 -6l5.500 6-5.500 6" fill="none" stroke="#c8c8c8" stroke-width="1.500" stroke-linecap="round" stroke-linejoin="round"/></g>
<g id="mdata"><path d="M-7 -7.500h14L0 7.500z" fill="none" stroke="#21c489" stroke-width="1.400" stroke-linejoin="round"/><g fill="#282828" stroke="#21c489" stroke-width="1.300"><rect x="-9.500" y="-10" width="5" height="5"/><rect x="4.500" y="-10" width="5" height="5"/><rect x="-2.500" y="5" width="5" height="5"/></g></g>
</defs>
<use href="#coll" x="1631" y="117"/>
<path d="M1624 142l6 6 6-6" fill="none" stroke="#c8c8c8" stroke-width="1.500" stroke-linecap="round" stroke-linejoin="round"/>
<rect x="1646" y="132" width="26" height="26" rx="5" fill="#4a4a4a" stroke="#5e5e5e"/>
<use href="#coll" x="1659" y="145.500"/>
<rect x="1828" y="137" width="16" height="16" rx="2.500" fill="#e6e6e6"/><path d="M1831 145l3.500 4 6.500-8" fill="none" stroke="#222" stroke-width="2.200"/>
<use href="#eye" x="1864" y="145"/><use href="#cam" x="1892" y="145"/>
<circle cx="1603" cy="173.500" r="2.600" fill="#e0e0e0"/>
<use href="#chev" x="1657" y="173"/><use href="#mesh" x="1687" y="173.500"/>
<use href="#eye" x="1864" y="173"/><use href="#cam" x="1892" y="173"/>
<use href="#chev" x="1657" y="201"/>
<rect x="1677" y="191" width="20" height="20" rx="2.500" fill="#e8924a"/><path d="M1680 208l5.500-9 5.500 9z" fill="#282828"/><circle cx="1691.500" cy="196.500" r="2" fill="#282828"/>
<rect x="1783.500" y="191" width="19" height="19" rx="2" fill="none" stroke="#c75469" stroke-width="1.400"/><path d="M1784 210l6.500-10 6 10z" fill="#c75469"/><circle cx="1797" cy="196.500" r="1.800" fill="#c75469"/>
<use href="#eye" x="1864" y="201"/><use href="#cam" x="1892" y="201"/>
<circle cx="1603" cy="229.500" r="2.600" fill="#e0e0e0"/>
<use href="#chev" x="1657" y="229"/><use href="#mesh" x="1687" y="229.500"/>
<use href="#mdata" x="1784.500" y="229"/>
<use href="#eye" x="1864" y="229"/><use href="#cam" x="1892" y="229"/>
<!-- walls row -->
<g fill="none" stroke="#b9c4dc" stroke-width="1.300"><path d="M1597 251.500h10M1595.500 253v10M1597 264.500h10M1608.500 255v8"/><rect x="1593.500" y="249.500" width="4" height="4"/><rect x="1593.500" y="262.500" width="4" height="4"/><rect x="1606.500" y="262.500" width="4" height="4"/></g><rect x="1605.500" y="247.500" width="6.500" height="6.500" fill="#fff"/>
<use href="#chev" x="1657" y="257"/>
<rect x="1674" y="244.500" width="26" height="26" rx="5" fill="#5b6f96" stroke="#7a8bb0"/>
<use href="#mesh" x="1687" y="257.500"/>
<path d="M1779 263.500l7.500-7.500a4.500 4.500 0 0 1 5.500-6l-3 3 .5 3 3 .5 3-3a4.500 4.500 0 0 1-6 5.500l-7.500 7.500a2 2 0 0 1-3-3z" fill="none" stroke="#6f8fe0" stroke-width="1.500" stroke-linejoin="round"/>
<rect x="1802" y="245" width="19" height="25" rx="4" fill="#2f7f86"/>
<use href="#mdata" x="1814" y="257"/>
<use href="#eye" x="1864" y="257"/><use href="#cam" x="1892" y="257"/>
</svg>
<div class="t" style="left:1650px;top:109px;color:#c8c8c8">Scene Collection</div>
<div class="t" style="left:1678px;top:137px;color:#fff">Collection</div>
<div class="t" style="left:1706px;top:165px;color:#c8c8c8">Background</div>
<div class="t" style="left:1706px;top:193px;color:#c8c8c8">Empty</div>
<div class="t" style="left:1706px;top:221px;color:#c8c8c8">Floor</div>
<div class="t" style="left:1706px;top:249px;color:#ffb340">Walls</div>
<div class="abs" style="left:1600px;top:354px;width:283px;height:4px;border-radius:2px;background:#3e3e3e"></div>

<!-- PROPERTIES -->
<div class="dd" style="left:1601px;top:369px;width:43px;height:27px"></div>
<svg style="left:1604px;top:371px" width="40" height="24" viewBox="0 0 40 24"><g fill="#e0e0e0"><rect x="2" y="2" width="19" height="8" rx="4"/><rect x="2" y="13" width="19" height="8" rx="4"/></g><circle cx="16.500" cy="6" r="2.600" fill="#282828"/><circle cx="6.500" cy="17" r="2.600" fill="#282828"/><path d="M25.500 10l4 4 4-4" class="ic" stroke-width="1.600"/></svg>
<div class="abs" style="left:1680px;top:369px;width:162px;height:27px;background:#1d1d1d;border:1px solid #3a3a3a;border-radius:5px"></div>
<svg style="left:1684px;top:372px" width="22" height="22" viewBox="0 0 22 22"><circle cx="13" cy="8.500" r="6" class="ic" stroke="#d8d8d8" stroke-width="1.600"/><path d="M8.500 13L2.500 19" class="ic" stroke="#d8d8d8" stroke-width="2"/></svg>
<div class="t" style="left:1715px;top:373px;color:#6a6a6a">Search</div>
<div class="dd" style="left:1881px;top:369px;width:27px;height:27px"></div>
<svg style="left:1887px;top:377px" width="14" height="12" viewBox="0 0 14 12"><path d="M2.500 4l4.500 4.500L11.500 4" class="ic" stroke-width="1.600"/></svg>
<!-- nav active tab -->
<div class="abs" style="left:1591px;top:743px;width:39px;height:37px;background:#303030;border-radius:6px 0 0 6px"></div>
<svg style="left:1590px;top:399px" width="40" height="591" viewBox="1590 399 40 591">
<g fill="#dcdcdc"><rect x="1601.500" y="406" width="2.200" height="8"/><path d="M1600 414h5.200v6.500q0 2.600-2.600 2.600t-2.600-2.600z"/><path d="M1611 406.500v4.500q0 2.600 2.400 3v12.500h2.600v-12.500q2.400-.4 2.400-3v-4.500h-1.800v4.800h-3.800v-4.800z"/></g>
<g><path d="M1601 459.500h12v3h5.500v13h-17.500z" fill="#dcdcdc"/><rect x="1603.500" y="465" width="9" height="7.500" fill="#1d1d1d"/><path d="M1604.500 467h7M1604.500 469.500h7" stroke="#dcdcdc" stroke-width="1.200"/><rect x="1614.500" y="465" width="2.500" height="2.500" fill="#1d1d1d"/><rect x="1603" y="457" width="8" height="2.500" fill="#dcdcdc"/></g>
<g><path d="M1600.500 497.500h19v7h-3v-3.500h-13v3.500h-3z" fill="#dcdcdc"/><rect x="1604.500" y="502.500" width="11" height="11" fill="none" stroke="#dcdcdc" stroke-width="1.500"/><path d="M1606 512l3.200-4.500 2.300 2.800 1.200-1.300 2.200 3z" fill="#dcdcdc"/></g>
<g fill="none" stroke="#dcdcdc" stroke-width="1.300"><path d="M1600.500 540V555.500h14.500M1603 537.500V553h14.500"/><rect x="1605.500" y="535" width="14" height="14" rx="1" fill="#1d1d1d"/></g><path d="M1607 547.500l4-6 3 4 1.500-1.500 3 3.500z" fill="#dcdcdc"/><circle cx="1616.500" cy="539" r="1.500" fill="#dcdcdc"/>
<g><path d="M1605.500 573c2.500 4 5 7 5 10.500a5 5 0 0 1-10 0c0-3.500 2.500-6.500 5-10.500z" fill="#dcdcdc"/><circle cx="1613.500" cy="588" r="4.300" fill="#1d1d1d" stroke="#dcdcdc" stroke-width="1.500"/><circle cx="1616.500" cy="576" r="2.600" fill="#dcdcdc"/></g>
<g><circle cx="1610" cy="623" r="9" fill="none" stroke="#d0546b" stroke-width="1.700"/><path d="M1604 618c2-1 4 0 5 1.500s3 1 3.500 3-1 3-2.500 3.500-1 3-3 3.500-2-2.500-3-4-2-3-1.500-5zM1613 616.500c2 .5 3.500 2 4 4l-2.500-.5z" fill="#d0546b"/><path d="M1600.500 632.500l19-19" stroke="#d0546b" stroke-width="1.400"/></g>
<g><rect x="1600.500" y="662" width="19" height="5.500" rx="1" fill="none" stroke="#dcdcdc" stroke-width="1.500"/><path d="M1602.500 668v12.500h15V668" fill="none" stroke="#dcdcdc" stroke-width="1.500"/><rect x="1607.500" y="671" width="5" height="2.500" rx="1" fill="#dcdcdc"/></g>
<g><rect x="1603.500" y="715.500" width="13" height="13" fill="#e8924a"/><path d="M1600.500 717v-4.500h4.500M1615 712.500h4.500v4.500M1619.500 727v4.500h-4.500M1605 731.500h-4.500v-4.500" fill="none" stroke="#a0683a" stroke-width="1.400"/></g>
<g transform="translate(0 -3)"><path d="M1601.500 770.500l8-8a5 5 0 0 1 6.500-6.500l-3.500 3.500.5 3 3 .5 3.500-3.500a5 5 0 0 1-6.500 6.500l-8 8a2.300 2.300 0 0 1-3.500-3.500z" fill="#6f96e6"/></g>
<g stroke="#6f96e6" stroke-width="1.500" fill="#6f96e6"><path d="M1603 794.500l13 1M1603 794.500l1 14M1603 794.500l13 14" fill="none"/><circle cx="1603.500" cy="794.500" r="2.800"/><circle cx="1617" cy="795.500" r="1.800"/><circle cx="1604" cy="809" r="1.800"/><circle cx="1617" cy="809" r="1.800"/></g>
<g><path d="M1617 833.500a9 9 0 1 0 1.500 11" fill="none" stroke="#6f96e6" stroke-width="1.600"/><circle cx="1609" cy="840.500" r="3.600" fill="#6f96e6"/><circle cx="1618" cy="832.500" r="2.200" fill="#6f96e6"/></g>
<g fill="none" stroke="#6f96e6" stroke-width="1.600"><path d="M1602.500 883a7 7 0 0 1 8-10l7-3a3.500 3.500 0 0 1 3 6l-5 6a7 7 0 0 1-13 1z"/><circle cx="1609" cy="880.500" r="2.800"/></g><circle cx="1617.500" cy="872.500" r="1.300" fill="#6f96e6"/>
<g><path d="M1603 910.500h14l-7 15z" fill="none" stroke="#21c489" stroke-width="1.500" stroke-linejoin="round"/><g fill="#1d1d1d" stroke="#21c489" stroke-width="1.400"><rect x="1600.500" y="907.500" width="5" height="5"/><rect x="1614.500" y="907.500" width="5" height="5"/><rect x="1607.500" y="923" width="5" height="5"/></g></g>
<g><circle cx="1610" cy="957" r="9" fill="none" stroke="#d0546b" stroke-width="1.800"/><path d="M1610 948a9 9 0 0 1 9 9h-9zM1610 966a9 9 0 0 1-9-9h9z" fill="#d0546b"/></g>
</svg>
<!-- breadcrumb -->
<svg style="left:1640px;top:413px" width="270" height="28" viewBox="1640 413 270 28">
<rect x="1647.500" y="420.500" width="11" height="11" fill="#e6e6e6"/><path d="M1644 421v-4.500h4.500M1657.500 416.500h4.500v4.500M1662 431v4.500h-4.500M1648.500 435.500h-4.500v-4.500" fill="none" stroke="#bdbdbd" stroke-width="1.400"/>
<path d="M1738.500 420l6 6-6 6" fill="none" stroke="#d0d0d0" stroke-width="1.600" stroke-linecap="round" stroke-linejoin="round"/>
<g fill="none" stroke-width="1.500" stroke-linejoin="round"><path d="M1762.500 421.500h12v13h-12zM1762.500 421.500" stroke="#909090"/><path d="M1766 421v-3.500h13v13.500h-4" stroke="#e0e0e0"/><path d="M1762.500 421.500l3.500-4M1774.500 421.500l4.500-4M1774.500 434.500l4.500-3.500" stroke="#e0e0e0"/></g>
<g fill="none" stroke="#b0b0b0" stroke-width="1.400" stroke-linejoin="round"><path d="M1895 417.500l6.500 6.500-3 .5-3.500 3.500-.5 4.500-7.500-7.500 4.500-.5 3.500-3.500zM1890 429.500L1884.500 435"/></g>
</svg>
<div class="t" style="left:1676px;top:417px">Walls</div>
<div class="t" style="left:1793px;top:417px">Solidify</div>
<!-- add modifier -->
<div class="btn" style="left:1640px;top:463px;width:268px;height:26px;border-radius:5px"></div>
<svg style="left:1649px;top:469px" width="14" height="14" viewBox="0 0 14 14"><path d="M7 1.500v11M1.500 7h11" class="ic" stroke="#e6e6e6" stroke-width="1.500"/></svg>
<div class="t" style="left:1640px;top:466px;width:294px;text-align:center">Add Modifier</div>
<!-- modifier panel -->
<div class="abs" style="left:1640px;top:503px;width:268px;height:500px;background:#3d3d3d;border:1px solid #4772b3;border-radius:5px"></div>
<svg style="left:1640px;top:503px" width="268" height="40" viewBox="1640 503 268 40">
<path d="M1651.500 518.500l6 6 6-6" fill="none" stroke="#d0d0d0" stroke-width="1.600" stroke-linecap="round" stroke-linejoin="round"/>
<g fill="none" stroke-width="1.500" stroke-linejoin="round"><path d="M1673 517.500h12v13h-12z" stroke="#909090"/><path d="M1676.500 517v-3.500h13v13.500h-4" stroke="#e0e0e0"/><path d="M1673 517.500l3.500-4M1685 517.500l4.500-4M1685 530.500l4.500-3.500" stroke="#e0e0e0"/></g>
<path d="M1712 508h20v26h-20q-4 0-4-4v-18q0-4 4-4z" fill="#545454"/>
<rect x="1733" y="508" width="25" height="26" fill="#4772b3"/><rect x="1759" y="508" width="25" height="26" fill="#4772b3"/><rect x="1785" y="508" width="26" height="26" fill="#4772b3"/>
<path d="M1812 508h22q4 0 4 4v18q0 4-4 4h-22z" fill="#282828"/>
<g fill="none" stroke="#e6e6e6" stroke-width="1.400" stroke-linejoin="round"><path d="M1714 514.500h12l-6 13z"/><g fill="#545454"><rect x="1711.500" y="512" width="4.500" height="4.500"/><rect x="1724" y="512" width="4.500" height="4.500"/><rect x="1717.800" y="525.500" width="4.500" height="4.500"/></g></g>
<g fill="none" stroke="#e6e6e6" stroke-width="1.300"><path d="M1741 515h9M1739.500 516.500v10M1741 528h10M1752.500 518.500v8"/><rect x="1737.500" y="513" width="4" height="4"/><rect x="1737.500" y="526" width="4" height="4"/><rect x="1750.500" y="526" width="4" height="4"/></g><rect x="1749.500" y="511" width="6.500" height="6.500" fill="#fff"/>
<g fill="none" stroke="#fff" stroke-width="1.600"><rect x="1763.500" y="513.500" width="16" height="11" rx="1"/><path d="M1768 529.500h7M1771.500 525v4"/></g>
<path d="M1789 515.500h4l1.500-2.500h7l1.500 2.500h4v13h-18z" fill="#fff"/><circle cx="1798" cy="521.500" r="4.800" fill="#4772b3"/><circle cx="1798" cy="521.500" r="2.800" fill="none" stroke="#fff" stroke-width="1.400"/>
<path d="M1819.500 518.500l5.500 5.500 5.500-5.500" fill="none" stroke="#e6e6e6" stroke-width="1.700" stroke-linecap="round" stroke-linejoin="round"/>
<path d="M1847.500 515.500l11 11M1858.500 515.500l-11 11" stroke="#e0e0e0" stroke-width="1.600" stroke-linecap="round"/>
<g fill="#6a6a6a"><circle cx="1879" cy="518.500" r="1"/><circle cx="1883" cy="518.500" r="1"/><circle cx="1887" cy="518.500" r="1"/><circle cx="1891" cy="518.500" r="1"/><circle cx="1879" cy="523.500" r="1"/><circle cx="1883" cy="523.500" r="1"/><circle cx="1887" cy="523.500" r="1"/><circle cx="1891" cy="523.500" r="1"/></g>
</svg>
<style>.lb{position:absolute;left:1640px;width:92px;text-align:right;white-space:nowrap;line-height:20px;height:20px}.fd{position:absolute;left:1745px;width:123px;height:26px;border-radius:5px}.m{background:#282828;border:1px solid #3b3b3b}.n{background:#545454}.dot{position:absolute;left:1880px;width:6px;height:6px;border-radius:3px;background:#e0e0e0}.fv{position:absolute;left:1745px;width:123px;text-align:center;line-height:20px;height:20px}.dim{opacity:.42}</style>
<div class="lb" style="top:554px">Mode</div><div class="fd m" style="top:550px"></div><div class="t" style="left:1755px;top:554px">Complex</div><div class="dot" style="top:560px"></div>
<div class="lb" style="top:589px">Thicknes...</div><div class="fd m" style="top:585px"></div><div class="t" style="left:1755px;top:589px">Constraints</div><div class="dot" style="top:595px"></div>
<div class="lb" style="top:624px">Boundary</div><div class="fd m" style="top:620px"></div><div class="t" style="left:1755px;top:624px">None</div><div class="dot" style="top:630px"></div>
<svg style="left:1850px;top:555px" width="16" height="90" viewBox="0 0 16 90"><g fill="none" stroke="#e0e0e0" stroke-width="1.600" stroke-linecap="round" stroke-linejoin="round"><path d="M3.500 7l4 4 4-4M3.500 42l4 4 4-4M3.500 77l4 4 4-4"/></g></svg>
<div class="lb" style="top:659px">Thickness</div><div class="fd n" style="top:655px"></div><div class="fv" style="top:659px">0.15 m</div><div class="dot" style="top:665px"></div>
<div class="lb" style="top:694px">Offset</div><div class="fd n" style="top:690px"></div><div class="fv" style="top:694px">-1.0000</div><div class="dot" style="top:700px"></div>
<div class="lb" style="top:729px">Merge T...</div><div class="fd n" style="top:725px"></div><div class="fv" style="top:729px">0.0001 m</div><div class="dot" style="top:735px"></div>
<div class="lb" style="top:764px">Rim</div><div class="abs" style="left:1745px;top:764px;width:18px;height:18px;border-radius:4px;background:#4772b3"></div><svg style="left:1745px;top:764px" width="18" height="18" viewBox="0 0 16 16"><path d="M3.500 8l3 3.500 6-7.500" fill="none" stroke="#fff" stroke-width="2"/></svg><div class="t" style="left:1768px;top:764px">Fill</div><div class="dot" style="top:770px"></div>
<div class="abs" style="left:1745px;top:794px;width:18px;height:18px;border-radius:4px;background:#545454"></div><div class="t" style="left:1768px;top:794px">Only Rim</div><div class="dot" style="top:800px"></div>
<div class="lb" style="top:844px">Vertex G...</div><div class="abs" style="left:1745px;top:840px;width:95px;height:26px;background:#1d1d1d;border-radius:4px 0 0 4px"></div><div class="abs" style="left:1841px;top:840px;width:27px;height:26px;background:#454545;border-radius:0 4px 4px 0"></div>
<svg style="left:1747px;top:841px" width="29" height="24" viewBox="0 0 24 20"><g fill="#e6e6e6"><rect x="2" y="6" width="4.500" height="4.500"/><rect x="7.500" y="6" width="4.500" height="4.500"/><rect x="7.500" y="11.500" width="4.500" height="4.500"/><rect x="2" y="11.500" width="4.500" height="4.500" opacity=".9"/></g><g fill="none" stroke="#cfcfcf" stroke-width="1"><rect x="8" y="1.500" width="3.500" height="3.500"/><rect x="14" y="6.500" width="3.500" height="3.500"/><rect x="14" y="12" width="3.500" height="3.500"/></g></svg>
<svg style="left:1844px;top:846px" width="22" height="14" viewBox="0 0 22 14"><path d="M2 7h18M5.500 3.500L2 7l3.500 3.500M16.500 3.500L20 7l-3.500 3.500" fill="none" stroke="#7a7a7a" stroke-width="1.300"/></svg>
<div class="lb dim" style="top:879px">Factor</div><div class="fd n dim" style="top:875px;opacity:.5"></div><div class="fv dim" style="top:879px">0.000</div><div class="dot dim" style="top:885px;opacity:.25"></div>
<div class="abs" style="left:1745px;top:914px;width:18px;height:18px;border-radius:4px;background:#474747"></div><div class="t dim" style="left:1768px;top:914px">Flat Faces</div><div class="dot" style="top:920px;opacity:.25"></div>
<svg style="left:1669px;top:958px" width="12" height="16" viewBox="0 0 12 16"><path d="M3.500 2.500l5 5.500-5 5.500" fill="none" stroke="#d0d0d0" stroke-width="1.500" stroke-linecap="round" stroke-linejoin="round"/></svg>
<div class="t" style="left:1689px;top:957px">Normals</div>
<!-- scrollbar -->
<div class="abs" style="left:1913px;top:403px;width:4px;height:225px;border-radius:2px;background:#4a4a4a"></div>
<!-- status bar bottom -->
<div class="abs" style="left:0;top:989px;width:1919px;height:13px;background:#181818"></div>
<svg style="left:1820px;top:992px" width="94" height="10" viewBox="1825 992 94 10"><g fill="none" stroke="#b8b8b8" stroke-width="1.300"><path d="M1831 1002c0-5 4-7.500 8-7.500s7 2.500 7 7M1834 997l12 5M1839 994.500v8"/><path d="M1856 995v8"/><path d="M1866 1003l4.500-8M1876 995.500h6v2.500M1891 1001.500v.5M1899 998l3-2.500v7"/></g></svg>

<!-- TIMELINE -->
<div class="dd" style="left:12px;top:925px;width:43px;height:27px"></div>
<svg style="left:16px;top:927px" width="38" height="24" viewBox="0 0 38 24"><circle cx="11.500" cy="12" r="9.500" fill="#e6e6e6"/><path d="M13.500 5.500L8 12.500l5 5.500" fill="none" stroke="#282828" stroke-width="2.200"/><path d="M25 10l4 4 4-4" class="ic" stroke-width="1.600"/></svg>
<div class="dd" style="left:63px;top:925px;width:101px;height:27px;border-radius:5px 0 0 5px"></div>
<div class="dd" style="left:164px;top:925px;width:85px;height:27px;border-radius:0 5px 5px 0;border-left:none"></div>
<div class="t" style="left:73px;top:929px">Playback</div>
<div class="t" style="left:175px;top:929px">Keying</div>
<svg style="left:148px;top:932px" width="100" height="14" viewBox="0 0 100 14"><g class="ic" stroke-width="1.600"><path d="M2.500 5l4 4 4-4M87.500 5l4 4 4-4"/></g></svg>
<div class="t" style="left:263px;top:929px">View</div>
<div class="t" style="left:321px;top:929px">Marker</div>
<div class="btn" style="left:661px;top:925px;width:29px;height:27px;border-radius:5px 0 0 5px"></div>
<div class="dd" style="left:691px;top:925px;width:26px;height:27px;border-radius:0 5px 5px 0;background:#2c2c2c"></div>
<svg style="left:661px;top:925px" width="56" height="27" viewBox="0 0 56 27"><circle cx="14.500" cy="13.500" r="6.500" fill="none" stroke="#c8c8c8" stroke-width="1.500"/><path d="M38.500 11.500l3.500 3.500 3.500-3.500" class="ic" stroke="#5a5a5a" stroke-width="1.500"/></svg>
<div class="btn" style="left:725px;top:925px;width:167px;height:27px"></div>
<svg style="left:725px;top:925px" width="167" height="27" viewBox="725 925 167 27"><g fill="#fff"><rect x="731.500" y="931.500" width="2.500" height="14"/><path d="M745.500 931.500v14l-9-7z"/><path d="M754 938.500l6-6.500 5 6.500-5 6.500z"/><path d="M775.500 932v13l-7.500-6.500z"/><path d="M801 931v15l-13-7.500z"/><path d="M815 931v15l14-7.500z"/><path d="M840 932v13l7.500-6.500z"/><path d="M848 938.500l5-6.500 6 6.500-6 6.500z"/><path d="M871.500 931.500v14l9-7z"/><rect x="882" y="931.500" width="2.500" height="14"/></g><g stroke="#444" stroke-width="1"><path d="M751.500 925v27M779.500 925v27M807.500 925v27M835.500 925v27M863.500 925v27"/></g></svg>
<div class="btn" style="left:1193px;top:925px;width:103px;height:27px"></div><div class="t" style="left:1193px;top:929px;width:103px;text-align:center">1</div>
<div class="btn" style="left:1304px;top:925px;width:26px;height:27px;border-radius:5px 0 0 5px"></div>
<svg style="left:1304px;top:925px" width="26" height="27" viewBox="0 0 26 27"><g class="ic" stroke="#e6e6e6" stroke-width="1.500"><circle cx="12.500" cy="15" r="8"/><path d="M12.500 10.500v5h4M10 4.500h5M19.500 7l1.500-1.500"/></g></svg>
<div class="btn" style="left:1331px;top:925px;width:123px;height:27px;border-radius:0"></div>
<div class="btn" style="left:1455px;top:925px;width:118px;height:27px;border-radius:0 5px 5px 0"></div>
<div class="t" style="left:1352px;top:929px">Start</div><div class="t" style="left:1400px;top:929px;width:37px;text-align:right">1</div>
<div class="t" style="left:1476px;top:929px">End</div><div class="t" style="left:1500px;top:929px;width:54px;text-align:right">250</div>
<!-- frames -->
<div class="abs" style="left:41px;top:961px;width:35px;height:23px;background:#4772b3;border-radius:4px"></div>
<div class="t" style="left:41px;top:963px;width:35px;text-align:center;color:#fff">1</div>
<style>.fr{position:absolute;top:964px;width:60px;text-align:center;line-height:20px;color:#b8b8b8}</style>
<div class="fr" style="left:141px">20</div><div class="fr" style="left:259px">40</div><div class="fr" style="left:376px">60</div><div class="fr" style="left:494px">80</div><div class="fr" style="left:611px">100</div><div class="fr" style="left:729px">120</div><div class="fr" style="left:847px">140</div><div class="fr" style="left:965px">160</div><div class="fr" style="left:1082px">180</div><div class="fr" style="left:1200px">200</div><div class="fr" style="left:1318px">220</div><div class="fr" style="left:1436px">240</div>

</body></html>
